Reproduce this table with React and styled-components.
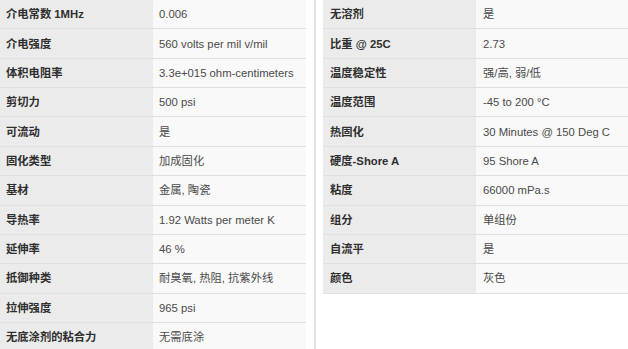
import React from "react";
import styled, { createGlobalStyle } from "styled-components";

const Global = createGlobalStyle`
  html, body { margin: 0; padding: 0; background: #ffffff; }
  body { font-family: "Liberation Sans", "Noto Sans CJK SC", Arial, sans-serif; }
`;

const Page = styled.div`
  display: flex;
  align-items: flex-start;
  height: 349px;
  width: 628px;
  overflow: hidden;
`;

const Panel = styled.div`
  width: ${(p) => p.$width}px;
  flex: none;
  display: flex;
  flex-direction: column;
`;

const Divider = styled.div`
  width: 2px;
  height: 349px;
  flex: none;
  background: #e2e2e2;
  margin: 0 7px 0 8px;
`;

const Row = styled.div`
  display: grid;
  grid-template-columns: 153px 1fr;
  flex: none;
  height: 29.36px;
  box-sizing: border-box;
  border-bottom: 1.5px solid #e0e0e0;
  font-size: 11.3px;
  line-height: 14px;
`;

const Label = styled.div`
  background: #ebebeb;
  color: #2f2f2f;
  font-weight: bold;
  padding-left: ${(p) => p.$pad}px;
  display: flex;
  align-items: center;
  white-space: nowrap;
`;

const Value = styled.div`
  background: #f9f9f9;
  color: #4a4a4a;
  padding-left: ${(p) => p.$pad}px;
  display: flex;
  align-items: center;
  white-space: nowrap;
`;

const left = [
  ["介电常数 1MHz", "0.006"],
  ["介电强度", "560 volts per mil v/mil"],
  ["体积电阻率", "3.3e+015 ohm-centimeters"],
  ["剪切力", "500 psi"],
  ["可流动", "是"],
  ["固化类型", "加成固化"],
  ["基材", "金属, 陶瓷"],
  ["导热率", "1.92 Watts per meter K"],
  ["延伸率", "46 %"],
  ["抵御种类", "耐臭氧, 热阻, 抗紫外线"],
  ["拉伸强度", "965 psi"],
  ["无底涂剂的粘合力", "无需底涂"],
];

const right = [
  ["无溶剂", "是"],
  ["比重 @ 25C", "2.73"],
  ["温度稳定性", "强/高, 弱/低"],
  ["温度范围", "-45 to 200 °C"],
  ["热固化", "30 Minutes @ 150 Deg C"],
  ["硬度-Shore A", "95 Shore A"],
  ["粘度", "66000 mPa.s"],
  ["组分", "单组份"],
  ["自流平", "是"],
  ["颜色", "灰色"],
];

function Table({ rows, width, pad }) {
  return (
    <Panel $width={width}>
      {rows.map(([k, v]) => (
        <Row key={k}>
          <Label $pad={pad}>{k}</Label>
          <Value $pad={pad}>{v}</Value>
        </Row>
      ))}
    </Panel>
  );
}

export default function App() {
  return (
    <>
      <Global />
      <Page>
        <Table rows={left} width={306} pad={6} />
        <Divider />
        <Table rows={right} width={305} pad={7} />
      </Page>
    </>
  );
}
